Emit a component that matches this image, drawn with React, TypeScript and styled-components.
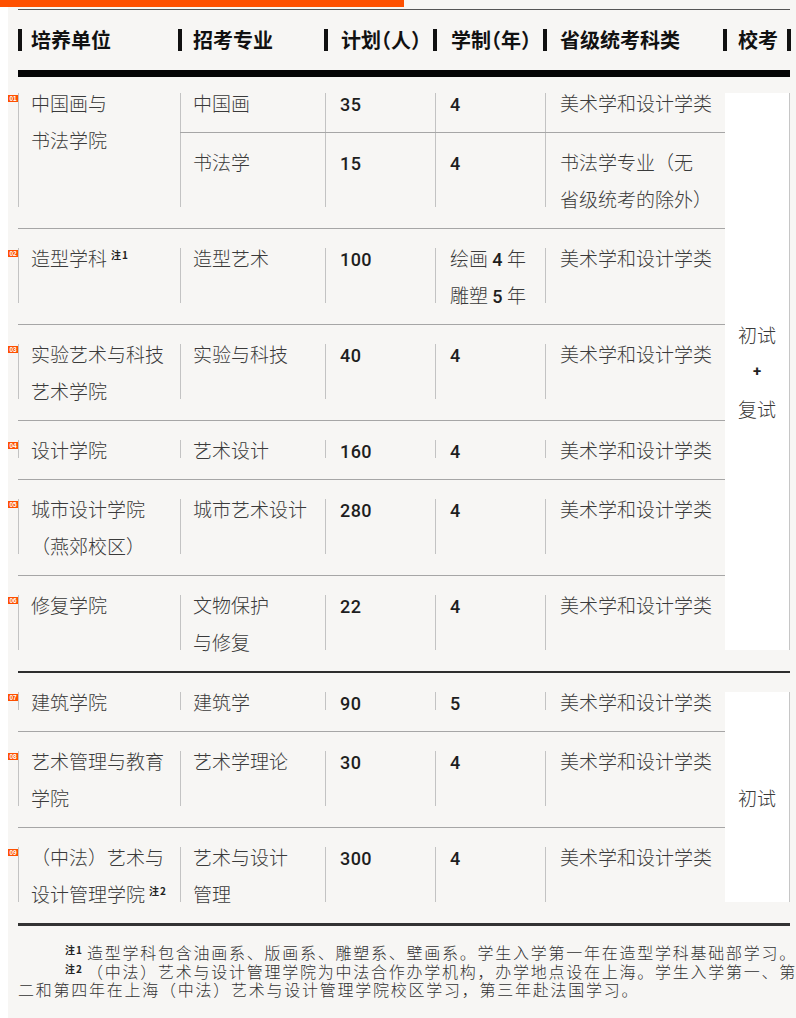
import React from 'react';
import styled, { createGlobalStyle } from 'styled-components';

const CJK = `"Noto Sans CJK SC", "Noto Sans", sans-serif`;
const NUM = `Roboto, "Noto Sans", sans-serif`;

const Global = createGlobalStyle`
  html, body { margin: 0; padding: 0; background: #ffffff; }
  body { overflow: hidden; font-family: ${CJK}; }
  * { box-sizing: border-box; }
`;

const Page = styled.div`
  width: 796px;
  min-height: 1018px;
  background: #f7f6f4;
  overflow: hidden;
`;

const Accent = styled.div`
  width: 404px;
  height: 7px;
  background: #fe5000;
`;

const Main = styled.main`
  border-left: 8px solid #ffffff;
  padding: 2px 0 0 10px;
  min-height: 1011px;
`;

const Sheet = styled.section`
  width: 772px;
`;

const Rule = styled.div<{ $h: number; $c: string }>`
  height: ${(p) => p.$h}px;
  background: ${(p) => p.$c};
`;

const HeaderRow = styled.div`
  display: flex;
  align-items: center;
  height: 60px;
  white-space: nowrap;
`;

const HeaderCell = styled.div<{ $w: number; $gap: number }>`
  flex: none;
  width: ${(p) => p.$w}px;
  display: flex;
  align-items: center;
  gap: ${(p) => p.$gap}px;
`;

const HeaderBar = styled.span<{ $shift: number }>`
  flex: none;
  width: 4px;
  height: 22px;
  margin-left: ${(p) => p.$shift}px;
  background: #111;
`;

const HeaderLabel = styled.span`
  font-size: 20px;
  font-weight: 700;
  color: #111;
  line-height: 1;
  font-feature-settings: "halt";
`;

const Group = styled.div`
  display: flex;
`;

const RowsColumn = styled.div`
  flex: none;
  width: 707px;
`;

const ExamColumn = styled.div<{ $top: number }>`
  flex: none;
  width: 65px;
  margin: ${(p) => p.$top}px 0 21px;
  background: #ffffff;
  border-right: 1px solid #c6c6c6;
  display: flex;
  flex-direction: column;
  align-items: center;
  justify-content: center;
`;

const ExamWord = styled.span`
  display: block;
  font-size: 19px;
  font-weight: 300;
  line-height: 37px;
  color: #3a3a3a;
`;

const ExamPlus = styled.span`
  display: block;
  font-family: ${NUM};
  font-weight: 700;
  font-size: 15px;
  line-height: 37px;
  color: #222;
`;

const Row = styled.div<{ $top: number; $last: boolean }>`
  display: flex;
  padding: ${(p) => p.$top}px 0 21px;
  border-bottom: ${(p) => (p.$last ? 'none' : '1px solid #a6a6a6')};
`;

const Cell = styled.div<{ $w: number; $pad: number }>`
  position: relative;
  flex: none;
  width: ${(p) => p.$w}px;
  padding-left: ${(p) => p.$pad}px;
  border-left: 1px solid #c3c3c3;
`;

const SubList = styled.div`
  flex: none;
  width: 545px;
  display: flex;
  flex-direction: column;
`;

const SubRow = styled.div<{ $divider: boolean }>`
  display: flex;
  border-bottom: ${(p) => (p.$divider ? '1px solid #a6a6a6' : 'none')};
`;

type Pos = 'single' | 'first' | 'last';

const margins: Record<Pos, string> = {
  single: '-9px 0 -10px',
  first: '-9px 0 11px',
  last: '10px 0 -10px',
};

const CellText = styled.div<{ $pos: Pos }>`
  margin: ${(p) => margins[p.$pos]};
  font-size: 19px;
  font-weight: 300;
  line-height: 37px;
  color: #3a3a3a;
  white-space: nowrap;
`;

const Line = styled.span`
  display: block;
  height: 37px;
`;

const Num = styled.span`
  font-family: ${NUM};
  font-weight: 500;
  font-size: 18px;
  line-height: 1;
  color: #1e1e1e;
  letter-spacing: 0.4px;
`;

const Badge = styled.span`
  position: absolute;
  left: -11px;
  top: 2px;
  width: 10px;
  height: 7px;
  background: #fe5000;
  color: #ffffff;
  font-family: "Liberation Sans", Arial, sans-serif;
  font-size: 6.5px;
  font-weight: 700;
  line-height: 7px;
  text-align: center;
  letter-spacing: -0.2px;
`;

const Sup = styled.span`
  display: inline-block;
  margin-left: 4px;
  font-size: 10px;
  font-weight: 700;
  line-height: 1;
  vertical-align: 7px;
  color: #222;
  letter-spacing: 1px;
`;

const Notes = styled.div`
  padding-top: 17px;
  width: 820px;
  font-size: 16px;
  font-weight: 300;
  letter-spacing: 1.75px;
  line-height: 18.5px;
  color: #333;
  white-space: nowrap;
`;

const NoteP = styled.p`
  margin: 0;
  text-indent: 47px;
`;

const NoteSup = styled.span`
  display: inline-block;
  width: 22px;
  text-indent: 0;
  font-size: 10px;
  font-weight: 700;
  line-height: 1;
  vertical-align: 5px;
  letter-spacing: 1px;
  color: #222;
`;

type Sub = { major: string[]; plan: string; years: string[]; cat: string[] };
type RowData = { no: string; unit: string[]; note?: string; subs: Sub[] };

const CAT = '美术学和设计学类';

const group1: RowData[] = [
  {
    no: '01',
    unit: ['中国画与', '书法学院'],
    subs: [
      { major: ['中国画'], plan: '35', years: ['4'], cat: [CAT] },
      { major: ['书法学'], plan: '15', years: ['4'], cat: ['书法学专业（无', '省级统考的除外）'] },
    ],
  },
  {
    no: '02',
    unit: ['造型学科'],
    note: '注1',
    subs: [{ major: ['造型艺术'], plan: '100', years: ['绘画 4 年', '雕塑 5 年'], cat: [CAT] }],
  },
  {
    no: '03',
    unit: ['实验艺术与科技', '艺术学院'],
    subs: [{ major: ['实验与科技'], plan: '40', years: ['4'], cat: [CAT] }],
  },
  { no: '04', unit: ['设计学院'], subs: [{ major: ['艺术设计'], plan: '160', years: ['4'], cat: [CAT] }] },
  {
    no: '05',
    unit: ['城市设计学院', '（燕郊校区）'],
    subs: [{ major: ['城市艺术设计'], plan: '280', years: ['4'], cat: [CAT] }],
  },
  {
    no: '06',
    unit: ['修复学院'],
    subs: [{ major: ['文物保护', '与修复'], plan: '22', years: ['4'], cat: [CAT] }],
  },
];

const group2: RowData[] = [
  { no: '07', unit: ['建筑学院'], subs: [{ major: ['建筑学'], plan: '90', years: ['5'], cat: [CAT] }] },
  {
    no: '08',
    unit: ['艺术管理与教育', '学院'],
    subs: [{ major: ['艺术学理论'], plan: '30', years: ['4'], cat: [CAT] }],
  },
  {
    no: '09',
    unit: ['（中法）艺术与', '设计管理学院'],
    note: '注2',
    subs: [{ major: ['艺术与设计', '管理'], plan: '300', years: ['4'], cat: [CAT] }],
  },
];

const headers = [
  { label: '培养单位', w: 162, gap: 9, shift: 0 },
  { label: '招考专业', w: 145, gap: 11, shift: -2 },
  { label: '计划（人）', w: 110, gap: 13, shift: -1 },
  { label: '学制（年）', w: 110, gap: 14, shift: -2 },
  { label: '省级统考科类', w: 180, gap: 13, shift: -2 },
  { label: '校考', w: 64, gap: 11, shift: -2 },
  { label: '', w: 40, gap: 0, shift: -2 },
];

function withNumbers(s: string) {
  return s.split(/(\d+)/).map((part, i) => (/^\d+$/.test(part) ? <Num key={i}>{part}</Num> : part));
}

function Fields({ sub, pos }: { sub: Sub; pos: Pos }) {
  return (
    <>
      <Cell $w={145} $pad={12}>
        <CellText $pos={pos}>
          {sub.major.map((l) => (
            <Line key={l}>{l}</Line>
          ))}
        </CellText>
      </Cell>
      <Cell $w={110} $pad={14}>
        <CellText $pos={pos}>
          <Line>{withNumbers(sub.plan)}</Line>
        </CellText>
      </Cell>
      <Cell $w={110} $pad={14}>
        <CellText $pos={pos}>
          {sub.years.map((l) => (
            <Line key={l}>{withNumbers(l)}</Line>
          ))}
        </CellText>
      </Cell>
      <Cell $w={180} $pad={14}>
        <CellText $pos={pos}>
          {sub.cat.map((l) => (
            <Line key={l}>{l}</Line>
          ))}
        </CellText>
      </Cell>
    </>
  );
}

function TableRow({ row, top, last }: { row: RowData; top: number; last: boolean }) {
  return (
    <Row $top={top} $last={last}>
      <Cell $w={162} $pad={12}>
        <Badge>{row.no}</Badge>
        <CellText $pos="single">
          {row.unit.map((l, i) => (
            <Line key={l}>
              {l}
              {i === row.unit.length - 1 && row.note ? <Sup>{row.note}</Sup> : null}
            </Line>
          ))}
        </CellText>
      </Cell>
      {row.subs.length === 1 ? (
        <Fields sub={row.subs[0]} pos="single" />
      ) : (
        <SubList>
          {row.subs.map((s, i) => (
            <SubRow key={i} $divider={i < row.subs.length - 1}>
              <Fields sub={s} pos={i === 0 ? 'first' : 'last'} />
            </SubRow>
          ))}
        </SubList>
      )}
    </Row>
  );
}

function TableGroup({ rows, firstTop, exam }: { rows: RowData[]; firstTop: number; exam: React.ReactNode }) {
  return (
    <Group>
      <RowsColumn>
        {rows.map((r, i) => (
          <TableRow key={r.no} row={r} top={i === 0 ? firstTop : 19} last={i === rows.length - 1} />
        ))}
      </RowsColumn>
      <ExamColumn $top={firstTop}>{exam}</ExamColumn>
    </Group>
  );
}

export default function App() {
  return (
    <>
      <Global />
      <Page>
        <Accent />
        <Main>
          <Sheet>
            <Rule $h={1} $c="#555" />
            <HeaderRow>
              {headers.map((h, i) => (
                <HeaderCell key={i} $w={h.w} $gap={h.gap}>
                  <HeaderBar $shift={h.shift} />
                  {h.label ? <HeaderLabel>{h.label}</HeaderLabel> : null}
                </HeaderCell>
              ))}
            </HeaderRow>
            <Rule $h={7} $c="#050505" />
            <TableGroup
              rows={group1}
              firstTop={16}
              exam={
                <>
                  <ExamWord>初试</ExamWord>
                  <ExamPlus>+</ExamPlus>
                  <ExamWord>复试</ExamWord>
                </>
              }
            />
            <Rule $h={2} $c="#2e2e2e" />
            <TableGroup rows={group2} firstTop={19} exam={<ExamWord>初试</ExamWord>} />
            <Rule $h={3} $c="#333" />
          </Sheet>
          <Notes>
            <NoteP>
              <NoteSup>注1</NoteSup>造型学科包含油画系、版画系、雕塑系、壁画系。学生入学第一年在造型学科基础部学习。
            </NoteP>
            <NoteP>
              <NoteSup>注2</NoteSup>（中法）艺术与设计管理学院为中法合作办学机构，办学地点设在上海。学生入学第一、第
              <br />
              二和第四年在上海（中法）艺术与设计管理学院校区学习，第三年赴法国学习。
            </NoteP>
          </Notes>
        </Main>
      </Page>
    </>
  );
}
